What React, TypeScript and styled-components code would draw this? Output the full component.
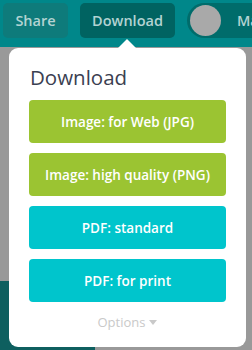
import styled, { createGlobalStyle } from "styled-components";

const GlobalStyle = createGlobalStyle`
    html, body {
        margin: 0;
        padding: 0;
        width: 252px;
        height: 350px;
        overflow: hidden;
        background: #999999;
        font-family: "Open Sans", "DejaVu Sans", sans-serif;
    }
`

const StyledPage = styled.div`
    position: relative;
    width: 252px;
    height: 350px;
    display: flex;
    flex-direction: column;
`

const StyledHeader = styled.div`
    display: flex;
    align-items: center;
    height: 47px;
    padding: 0 0 6px 3px;
    box-sizing: border-box;
    gap: 12px;
    background-color: #00878a;
`

const StyledHeaderButton = styled.div<{ $active?: boolean }>`
    display: flex;
    align-items: center;
    justify-content: center;
    height: 35px;
    width: ${(p) => (p.$active ? "95px" : "65px")};
    border-radius: 5px;
    background-color: ${(p) => (p.$active ? "#006361" : "#0e7b7b")};
    color: #b3d3d2;
    font-size: 14.5px;
    font-weight: 600;
    flex-shrink: 0;
`

const StyledUser = styled.div`
    display: flex;
    align-items: center;
    gap: 16px;
    height: 35px;
    padding-left: 3px;
    border-radius: 18px 0 0 18px;
    background-color: #006c6b;
    color: #b3d3d2;
    font-size: 14.5px;
    font-weight: 600;
    flex: 1;
    overflow: hidden;
    white-space: nowrap;
`

const StyledAvatar = styled.div`
    width: 31px;
    height: 31px;
    border-radius: 50%;
    background-color: #a9a9a9;
    flex-shrink: 0;
`

const StyledContent = styled.div`
    flex: 1;
    display: flex;
    flex-direction: column;
    justify-content: flex-end;
`

const StyledDarkBlock = styled.div`
    width: 95px;
    height: 69px;
    background-color: #0e5f5f;
`

const StyledPopup = styled.div`
    position: absolute;
    left: 9px;
    top: 48px;
    width: 237px;
    height: 299px;
    box-sizing: border-box;
    padding: 15px 20px 0 20px;
    background: #ffffff;
    border-radius: 9px;
    display: flex;
    flex-direction: column;

    &::before {
        content: "";
        position: absolute;
        top: -9px;
        left: 108px;
        border-left: 10px solid transparent;
        border-right: 10px solid transparent;
        border-bottom: 10px solid #ffffff;
    }
`

const StyledTitle = styled.div`
    font-size: 20.5px;
    line-height: 28px;
    color: #3b4051;
    margin: 0 0 9px 1px;
`

const StyledOptionList = styled.div`
    display: flex;
    flex-direction: column;
    gap: 10px;
`

const StyledOption = styled.div<{ $color: string }>`
    display: flex;
    align-items: center;
    justify-content: center;
    height: 43px;
    border-radius: 4px;
    background-color: ${(p) => p.$color};
    color: #ffffff;
    font-size: 13.5px;
    font-weight: 600;
`

const StyledMore = styled.div`
    display: flex;
    align-items: center;
    justify-content: center;
    gap: 4px;
    margin-top: 11px;
    color: #c9c9c9;
    font-size: 13px;

    &::after {
        content: "";
        border-left: 4px solid transparent;
        border-right: 4px solid transparent;
        border-top: 5px solid #c9c9c9;
        margin-top: 1px;
    }
`

const options = [
    { label: "Image: for Web (JPG)", color: "#9bc432" },
    { label: "Image: high quality (PNG)", color: "#9bc432" },
    { label: "PDF: standard", color: "#00c5cc" },
    { label: "PDF: for print", color: "#00c5cc" },
];

const App = () => {
    return (
        <StyledPage>
            <GlobalStyle />
            <StyledHeader>
                <StyledHeaderButton>Share</StyledHeaderButton>
                <StyledHeaderButton $active>Download</StyledHeaderButton>
                <StyledUser>
                    <StyledAvatar />
                    Martin
                </StyledUser>
            </StyledHeader>
            <StyledContent>
                <StyledDarkBlock />
            </StyledContent>
            <StyledPopup>
                <StyledTitle>Download</StyledTitle>
                <StyledOptionList>
                    {options.map((o) => (
                        <StyledOption key={o.label} $color={o.color}>{o.label}</StyledOption>
                    ))}
                </StyledOptionList>
                <StyledMore>Options</StyledMore>
            </StyledPopup>
        </StyledPage>
    );
};

export default App;
